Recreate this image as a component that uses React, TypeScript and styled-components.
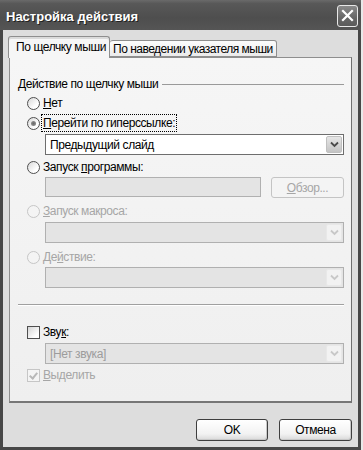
import styled, { createGlobalStyle } from 'styled-components';

const GlobalStyle = createGlobalStyle`
  html, body {
    margin: 0;
    padding: 0;
    background: #e9e9e9;
  }
  body {
    font-family: "Liberation Sans", Arial, sans-serif;
    font-size: 12px;
    letter-spacing: -0.4px;
    color: #000;
  }
`;

const App = () => {
  return (
    <>
      <GlobalStyle />
      <Window>
        <TitleBar>
          <Title>Настройка действия</Title>
          <CloseButton>
            <svg width="13" height="13" viewBox="0 0 13 13">
              <path d="M2 2 L11 11 M11 2 L2 11" stroke="#fff" strokeWidth="2.2" strokeLinecap="square" />
            </svg>
          </CloseButton>
        </TitleBar>
        <Body>
          <TabRow>
            <Tab $active $width={102}>По щелчку мыши</Tab>
            <Tab $width={167}>По наведении указателя мыши</Tab>
          </TabRow>
          <Panel>
            <GroupHeader>
              <span>Действие по щелчку мыши</span>
              <Rule />
            </GroupHeader>

            <OptionRow $mt={2}>
              <Radio />
              <Label><u>Н</u>ет</Label>
            </OptionRow>
            <OptionRow>
              <Radio $checked />
              <Label $focused><u>П</u>ерейти по гиперссылке:</Label>
            </OptionRow>
            <Select $mt={1}>
              <SelectText>Предыдущий слайд</SelectText>
              <DropButton><Chevron /></DropButton>
            </Select>

            <OptionRow $mt={2}>
              <Radio />
              <Label>Запуск <u>п</u>рограммы:</Label>
            </OptionRow>
            <FieldRow>
              <TextField />
              <Button $disabled $width={73}><u>О</u>бзор...</Button>
            </FieldRow>

            <OptionRow $mt={3}>
              <Radio $disabled />
              <Label $disabled><u>З</u>апуск макроса:</Label>
            </OptionRow>
            <Select $mt={1} $disabled>
              <SelectText />
              <DropButton $disabled><Chevron $disabled /></DropButton>
            </Select>

            <OptionRow $mt={4}>
              <Radio $disabled />
              <Label $disabled>Де<u>й</u>ствие:</Label>
            </OptionRow>
            <Select $disabled>
              <SelectText />
              <DropButton $disabled><Chevron $disabled /></DropButton>
            </Select>

            <Separator />

            <OptionRow $mt={16}>
              <Checkbox />
              <Label>Зву<u>к</u>:</Label>
            </OptionRow>
            <Select $mt={1} $disabled>
              <SelectText $disabled>[Нет звука]</SelectText>
              <DropButton $disabled><Chevron $disabled /></DropButton>
            </Select>
            <OptionRow $mt={1}>
              <Checkbox $checked $disabled />
              <Label $disabled><u>В</u>ыделить</Label>
            </OptionRow>
          </Panel>
          <ButtonBar>
            <Button $width={72}>OK</Button>
            <Button $width={73}>Отмена</Button>
          </ButtonBar>
        </Body>
      </Window>
    </>
  );
};

const Chevron = ({ $disabled }: { $disabled?: boolean }) => (
  <svg width="9" height="7" viewBox="0 0 9 7">
    <path d="M1 1.5 L4.5 5 L8 1.5" fill="none" stroke={$disabled ? '#c8c8c8' : '#4a4a4a'} strokeWidth="1.8" />
  </svg>
);

const Window = styled.div`
  width: 361px;
  height: 450px;
  display: flex;
  flex-direction: column;
  box-sizing: border-box;
`;

const TitleBar = styled.div`
  height: 30px;
  flex-shrink: 0;
  display: flex;
  align-items: center;
  justify-content: space-between;
  padding: 0 3px 0 6px;
  background: linear-gradient(#6a6a6a 0%, #585858 12%, #4e4e4e 60%, #555 100%);
`;

const Title = styled.div`
  color: #fff;
  font-family: "Liberation Sans", Arial, sans-serif;
  font-weight: bold;
  font-size: 13px;
  letter-spacing: 0;
  text-shadow: 1px 1px 0 #222;
  margin-top: 2px;
`;

const CloseButton = styled.div`
  width: 19px;
  height: 20px;
  border: 1px solid #e8e8e8;
  border-radius: 3px;
  background: linear-gradient(#8a8a8a, #666 60%, #5a5a5a);
  display: flex;
  align-items: center;
  justify-content: center;
  margin-top: 1px;
`;

const Body = styled.div`
  flex: 1;
  display: flex;
  flex-direction: column;
  background: #dddddd;
  border: 3px solid #474747;
  border-top: none;
  padding: 6px 5px 0 5px;
`;

const TabRow = styled.div`
  display: flex;
  align-items: flex-end;
  height: 21px;
  position: relative;
  z-index: 1;
`;

const Tab = styled.div<{ $active?: boolean; $width: number }>`
  box-sizing: border-box;
  width: ${({ $width }) => $width}px;
  height: ${({ $active }) => ($active ? '22px' : '17px')};
  margin-bottom: ${({ $active }) => ($active ? '-1px' : '0')};
  padding: ${({ $active }) => ($active ? '3px 0 0 7px' : '1px 0 0 3px')};
  letter-spacing: ${({ $active }) => ($active ? '-0.4px' : '-0.5px')};
  border: 1px solid #8e8e8e;
  border-bottom: ${({ $active }) => ($active ? 'none' : '1px solid #8e8e8e')};
  border-left: ${({ $active }) => ($active ? '1px solid #8e8e8e' : 'none')};
  border-radius: 3px 3px 0 0;
  background: ${({ $active }) => ($active ? '#f6f6f6' : 'linear-gradient(#fcfcfc, #ebebeb)')};
  box-shadow: ${({ $active }) => ($active ? 'inset 0 2px 0 #dadada' : 'none')};
  white-space: nowrap;
  overflow: hidden;
`;

const Panel = styled.div`
  margin-left: 1px;
  width: 343px;
  height: 346px;
  box-sizing: border-box;
  border: 1px solid #8e8e8e;
  border-right-color: #6f6f6f;
  border-bottom: 2px solid #767676;
  background: linear-gradient(#f6f6f6, #efefef);
  padding: 19px 7px 0 8px;
  display: flex;
  flex-direction: column;
`;

const GroupHeader = styled.div`
  height: 14px;
  display: flex;
  align-items: center;
  gap: 4px;
  white-space: nowrap;
`;

const Rule = styled.div`
  flex: 1;
  height: 1px;
  background: #9a9a9a;
  margin-top: 1px;
`;

const OptionRow = styled.div<{ $mt?: number }>`
  height: 20px;
  margin-top: ${({ $mt }) => $mt ?? 0}px;
  padding-left: 9px;
  display: flex;
  align-items: center;
  gap: 2px;
`;

const Radio = styled.span<{ $checked?: boolean; $disabled?: boolean }>`
  width: 13px;
  height: 13px;
  box-sizing: border-box;
  border-radius: 50%;
  border: 1px solid ${({ $disabled }) => ($disabled ? '#c6c6c6' : '#4f4f4f')};
  background: ${({ $disabled }) =>
    $disabled ? '#f4f4f4' : 'linear-gradient(135deg, #d8d8d8, #ffffff 70%)'};
  display: flex;
  align-items: center;
  justify-content: center;
  flex-shrink: 0;

  &::after {
    content: '';
    display: ${({ $checked }) => ($checked ? 'block' : 'none')};
    width: 5px;
    height: 5px;
    border-radius: 50%;
    background: radial-gradient(#6a6a6a, #9a9a9a);
  }
`;

const Checkbox = styled.span<{ $checked?: boolean; $disabled?: boolean }>`
  width: 13px;
  height: 13px;
  box-sizing: border-box;
  border: 1px solid ${({ $disabled }) => ($disabled ? '#c6c6c6' : '#4f4f4f')};
  background: ${({ $disabled }) =>
    $disabled ? '#f4f4f4' : 'linear-gradient(135deg, #d4d4d4, #ffffff 75%)'};
  flex-shrink: 0;
  position: relative;

  &::after {
    content: '';
    display: ${({ $checked }) => ($checked ? 'block' : 'none')};
    position: absolute;
    left: 3px;
    top: 1px;
    width: 3px;
    height: 6px;
    border: solid ${({ $disabled }) => ($disabled ? '#b8b8b8' : '#333')};
    border-width: 0 2px 2px 0;
    transform: rotate(40deg);
  }
`;

const Label = styled.span<{ $disabled?: boolean; $focused?: boolean }>`
  color: ${({ $disabled }) => ($disabled ? '#a6a6a6' : '#000')};
  outline: ${({ $focused }) => ($focused ? '1px dotted #000' : 'none')};
  padding: 1px 1px;
  line-height: 14px;
  white-space: nowrap;
`;

const Select = styled.div<{ $mt?: number; $disabled?: boolean }>`
  margin-top: ${({ $mt }) => $mt ?? 0}px;
  margin-left: 27px;
  height: 21px;
  box-sizing: border-box;
  border: 1px solid ${({ $disabled }) => ($disabled ? '#b0b0b0' : '#6e6e6e')};
  background: ${({ $disabled }) => ($disabled ? '#e4e4e4' : '#fff')};
  display: flex;
  align-items: center;
  padding: 1px;
`;

const SelectText = styled.span<{ $disabled?: boolean }>`
  flex: 1;
  padding-left: 3px;
  color: ${({ $disabled }) => ($disabled ? '#9c9c9c' : '#000')};
  white-space: nowrap;
`;

const DropButton = styled.span<{ $disabled?: boolean }>`
  width: 16px;
  height: 17px;
  box-sizing: border-box;
  border: 1px solid ${({ $disabled }) => ($disabled ? '#e8e8e8' : '#c0c0c0')};
  border-radius: 2px;
  background: ${({ $disabled }) =>
    $disabled ? '#f2f2f2' : 'linear-gradient(#e6e6e6, #c4c4c4)'};
  display: flex;
  align-items: center;
  justify-content: center;
`;

const FieldRow = styled.div`
  margin-left: 27px;
  height: 21px;
  display: flex;
  gap: 10px;
`;

const TextField = styled.div`
  width: 216px;
  height: 20px;
  box-sizing: border-box;
  border: 1px solid #b0b0b0;
  background: #e4e4e4;
`;

const Button = styled.div<{ $disabled?: boolean; $width: number }>`
  width: ${({ $width }) => $width}px;
  height: 21px;
  box-sizing: border-box;
  border: 1px solid ${({ $disabled }) => ($disabled ? '#c4c4c4' : '#3e3e3e')};
  border-radius: 3px;
  background: ${({ $disabled }) =>
    $disabled ? '#f4f4f4' : 'linear-gradient(#ffffff, #f2f2f2 70%, #d8d8d8)'};
  box-shadow: ${({ $disabled }) => ($disabled ? 'none' : 'inset -1px -1px 0 #c8c8c8')};
  color: ${({ $disabled }) => ($disabled ? '#a6a6a6' : '#000')};
  display: flex;
  align-items: center;
  justify-content: center;
`;

const Separator = styled.div`
  margin-top: 16px;
  height: 1px;
  background: #a0a0a0;
  border-bottom: 1px solid #ffffff;
`;

const ButtonBar = styled.div`
  display: flex;
  justify-content: flex-end;
  gap: 11px;
  padding-top: 16px;
  width: 344px;

  & > div {
    height: 22px;
  }
`;

export default App;
